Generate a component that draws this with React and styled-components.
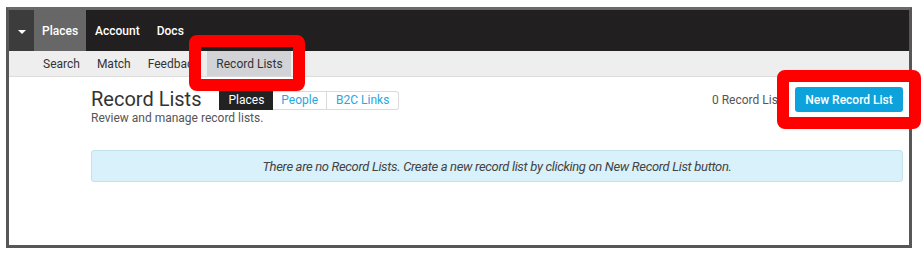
import React from "react";
import styled, { createGlobalStyle } from "styled-components";

const Global = createGlobalStyle`
  html, body { margin: 0; padding: 0; background: #fff; }
  body { font-family: Roboto, "Liberation Sans", Arial, sans-serif; width: 924px; height: 254px; overflow: hidden; }
`;

const Stage = styled.div`
  position: relative;
  width: 924px;
  height: 254px;
  padding: 7px 0 0 6px;
  box-sizing: border-box;
`;

const Frame = styled.div`
  width: 906px;
  height: 241px;
  box-sizing: border-box;
  border: 3px solid #575757;
  border-top-color: #6a6a6a;
  display: flex;
  flex-direction: column;
  background: #fff;
`;

const NavBar = styled.nav`
  height: 41px;
  background: #211f20;
  display: flex;
  align-items: stretch;
`;

const Caret = styled.div`
  width: 25px;
  background: #3c3c3c;
  display: flex;
  align-items: center;
  justify-content: center;
  &::after {
    content: "";
    border-left: 4px solid transparent;
    border-right: 4px solid transparent;
    border-top: 4px solid #fff;
    margin-top: 2px;
  }
`;

const NavItem = styled.a`
  display: flex;
  align-items: center;
  padding: 0 8px 0 ${(p) => (p.$active ? 8 : 9)}px;
  color: #fff;
  font-size: 12px;
  font-weight: 500;
  background: ${(p) => (p.$active ? "#676767" : "transparent")};
`;

const SubNav = styled.div`
  height: 25px;
  background: #eeeeee;
  border-bottom: 1px solid #dcdcdc;
  display: flex;
  align-items: stretch;
  padding-left: 25px;
`;

const SubItem = styled.a`
  display: flex;
  align-items: center;
  padding: 0 8px 0 9px;
  font-size: 12px;
  color: #333;
  background: ${(p) => (p.$active ? "#d2d3d7" : "transparent")};
`;

const Content = styled.div`
  padding: 10px 6px 0 82px;
`;

const HeaderRow = styled.div`
  display: flex;
  align-items: flex-start;
  justify-content: space-between;
`;

const TitleBlock = styled.div`
  display: flex;
  flex-direction: column;
`;

const TitleLine = styled.div`
  display: flex;
  align-items: center;
  gap: 18px;
`;

const Title = styled.h1`
  margin: 0;
  font-size: 20px;
  font-weight: 400;
  color: #333;
  line-height: 24px;
`;

const Tabs = styled.div`
  display: flex;
  margin-top: 2px;
`;

const Tab = styled.button`
  font-family: inherit;
  font-size: 12px;
  height: 19px;
  padding: 0 ${(p) => p.$pad}px;
  border: 1px solid ${(p) => (p.$active ? "#222" : "#dadada")};
  border-left-width: ${(p) => (p.$first ? 1 : 0)}px;
  background: ${(p) => (p.$active ? "#222" : "#fff")};
  color: ${(p) => (p.$active ? "#fff" : "#2aa6e0")};
  border-radius: ${(p) => (p.$last ? "0 3px 3px 0" : "0")};
  line-height: 17px;
  cursor: pointer;
`;

const Subtitle = styled.div`
  font-size: 12px;
  color: #555;
  margin-top: 0;
`;

const Actions = styled.div`
  display: flex;
  align-items: center;
  gap: 7px;
`;

const Count = styled.span`
  font-size: 12px;
  color: #555;
`;

const PrimaryButton = styled.button`
  font-family: inherit;
  font-size: 12px;
  font-weight: 500;
  color: #fff;
  background: #0ea2dc;
  border: none;
  border-radius: 3px;
  height: 25px;
  width: 108px;
  cursor: pointer;
`;

const Alert = styled.div`
  margin-top: 25px;
  height: 32px;
  box-sizing: border-box;
  background: #d8f1fa;
  border: 1px solid #c3e2ec;
  border-radius: 3px;
  display: flex;
  align-items: center;
  justify-content: center;
  font-size: 13px;
  font-style: italic;
  color: #444;
  letter-spacing: -0.33px;
`;

const Highlight = styled.div`
  position: absolute;
  left: ${(p) => p.$x}px;
  top: ${(p) => p.$y}px;
  width: ${(p) => p.$w}px;
  height: ${(p) => p.$h}px;
  box-sizing: border-box;
  border: 12px solid #ff0000;
  border-radius: 8px;
  pointer-events: none;
`;

export default function App() {
  return (
    <>
      <Global />
      <Stage>
        <Frame>
          <NavBar>
            <Caret />
            <NavItem $active>Places</NavItem>
            <NavItem>Account</NavItem>
            <NavItem>Docs</NavItem>
          </NavBar>
          <SubNav>
            <SubItem>Search</SubItem>
            <SubItem>Match</SubItem>
            <SubItem>Feedback</SubItem>
            <SubItem $active>Record Lists</SubItem>
          </SubNav>
          <Content>
            <HeaderRow>
              <TitleBlock>
                <TitleLine>
                  <Title>Record Lists</Title>
                  <Tabs>
                    <Tab $active $first $pad={8}>Places</Tab>
                    <Tab $pad={8}>People</Tab>
                    <Tab $last $pad={9}>B2C Links</Tab>
                  </Tabs>
                </TitleLine>
                <Subtitle>Review and manage record lists.</Subtitle>
              </TitleBlock>
              <Actions>
                <Count>0 Record Lists</Count>
                <PrimaryButton>New Record List</PrimaryButton>
              </Actions>
            </HeaderRow>
            <Alert>
              There are no Record Lists. Create a new record list by clicking on New Record List button.
            </Alert>
          </Content>
        </Frame>
        <Highlight $x={189} $y={35} $w={116} $h={56} />
        <Highlight $x={777} $y={70} $w={144} $h={59} />
      </Stage>
    </>
  );
}
